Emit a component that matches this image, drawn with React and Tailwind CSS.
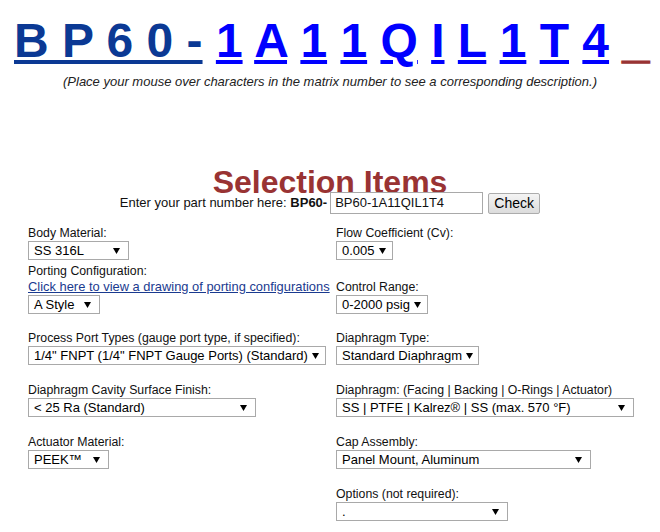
const codeChars = ['1', 'A', '1', '1', 'Q', 'I', 'L', '1', 'T', '4'];

function Arrow() {
  return (
    <svg width="7" height="6" viewBox="0 0 7 6" className="ml-[4px] shrink-0">
      <path d="M0 0H7L3.5 6Z" fill="#000" />
    </svg>
  );
}

function Select({ width, children }) {
  return (
    <div
      className={`mt-px flex h-[19px] items-center justify-between border border-[#a9a9a9] bg-white pl-[5px] pr-[8px] text-[13px] leading-none text-black ${width}`}
    >
      <span className="whitespace-nowrap">{children}</span>
      <Arrow />
    </div>
  );
}

function Field({ label, width, value, className = '' }) {
  return (
    <div className={`flex flex-col ${className}`}>
      <div className="leading-[14px]">{label}</div>
      <Select width={width}>{value}</Select>
    </div>
  );
}

export default function App() {
  return (
    <div className="h-[532px] w-[660px] overflow-hidden bg-white font-['Liberation_Sans',Arial,sans-serif] text-[#111]">
      {/* matrix number */}
      <div className="whitespace-pre pl-[14px] pt-[13px] text-[48px] font-bold leading-[55px]">
        <span className="text-[#0b3994] underline">B P 6 0 -</span>
        {codeChars.map((c, i) => (
          <span key={i}>
            {' '}
            <a href="#" className="text-[#0000ff] underline">
              {c}
            </a>
          </span>
        ))}
        {' '}
        <span className="text-[#993333] [-webkit-text-stroke:1.5px_#993333]">_</span>
      </div>

      <p className="mt-[6px] text-center text-[13px] italic leading-[15px] text-[#222]">
        (Place your mouse over characters in the matrix number to see a corresponding description.)
      </p>

      <h1 className="mt-[81px] text-center text-[32px] font-bold leading-[24px] text-[#993333]">
        Selection Items
      </h1>

      <div className="-mt-[2px] flex items-center justify-center text-[13px]">
        <span>
          Enter your part number here: <b>BP60-</b>
        </span>
        <div className="ml-[3px] flex h-[22px] w-[153px] items-center border border-[#a9a9a9] pl-[4px] text-[13px]">
          BP60-1A11QIL1T4
        </div>
        <button className="ml-[5px] h-[21px] w-[52px] rounded-[2px] border border-[#acacac] bg-gradient-to-b from-[#f4f4f4] to-[#dcdcdc] text-[14px] leading-none text-black">
          Check
        </button>
      </div>

      <div className="mt-[12px] grid grid-cols-[308px_1fr] items-end pl-[28px] text-[12.3px]">
        <Field label="Body Material:" width="w-[101px]" value="SS 316L" />
        <Field label="Flow Coefficient (Cv):" width="w-[57px]" value="0.005" />

        <div className="mt-[3px] flex flex-col">
          <div className="leading-[16px]">Porting Configuration:</div>
          <a href="#" className="whitespace-nowrap text-[12.9px] leading-[15px] text-[#1a3a8f] underline">
            Click here to view a drawing of porting configurations
          </a>
          <Select width="w-[72px]">A Style</Select>
        </div>
        <Field className="mt-[3px]" label="Control Range:" width="w-[92px]" value="0-2000 psig" />

        <Field
          className="mt-[17px]"
          label="Process Port Types (gauge port type, if specified):"
          width="w-[298px]"
          value={'1/4" FNPT (1/4" FNPT Gauge Ports) (Standard)'}
        />
        <Field className="mt-[17px]" label="Diaphragm Type:" width="w-[143px]" value="Standard Diaphragm" />

        <Field
          className="mt-[18px]"
          label="Diaphragm Cavity Surface Finish:"
          width="w-[228px]"
          value="< 25 Ra (Standard)"
        />
        <Field
          className="mt-[18px]"
          label="Diaphragm: (Facing | Backing | O-Rings | Actuator)"
          width="w-[298px]"
          value="SS | PTFE | Kalrez® | SS (max. 570 °F)"
        />

        <Field className="mt-[18px]" label="Actuator Material:" width="w-[81px]" value="PEEK™" />
        <Field className="mt-[18px]" label="Cap Assembly:" width="w-[255px]" value="Panel Mount, Aluminum" />

        <div />
        <Field className="mt-[18px]" label="Options (not required):" width="w-[172px]" value="." />
      </div>
    </div>
  );
}
